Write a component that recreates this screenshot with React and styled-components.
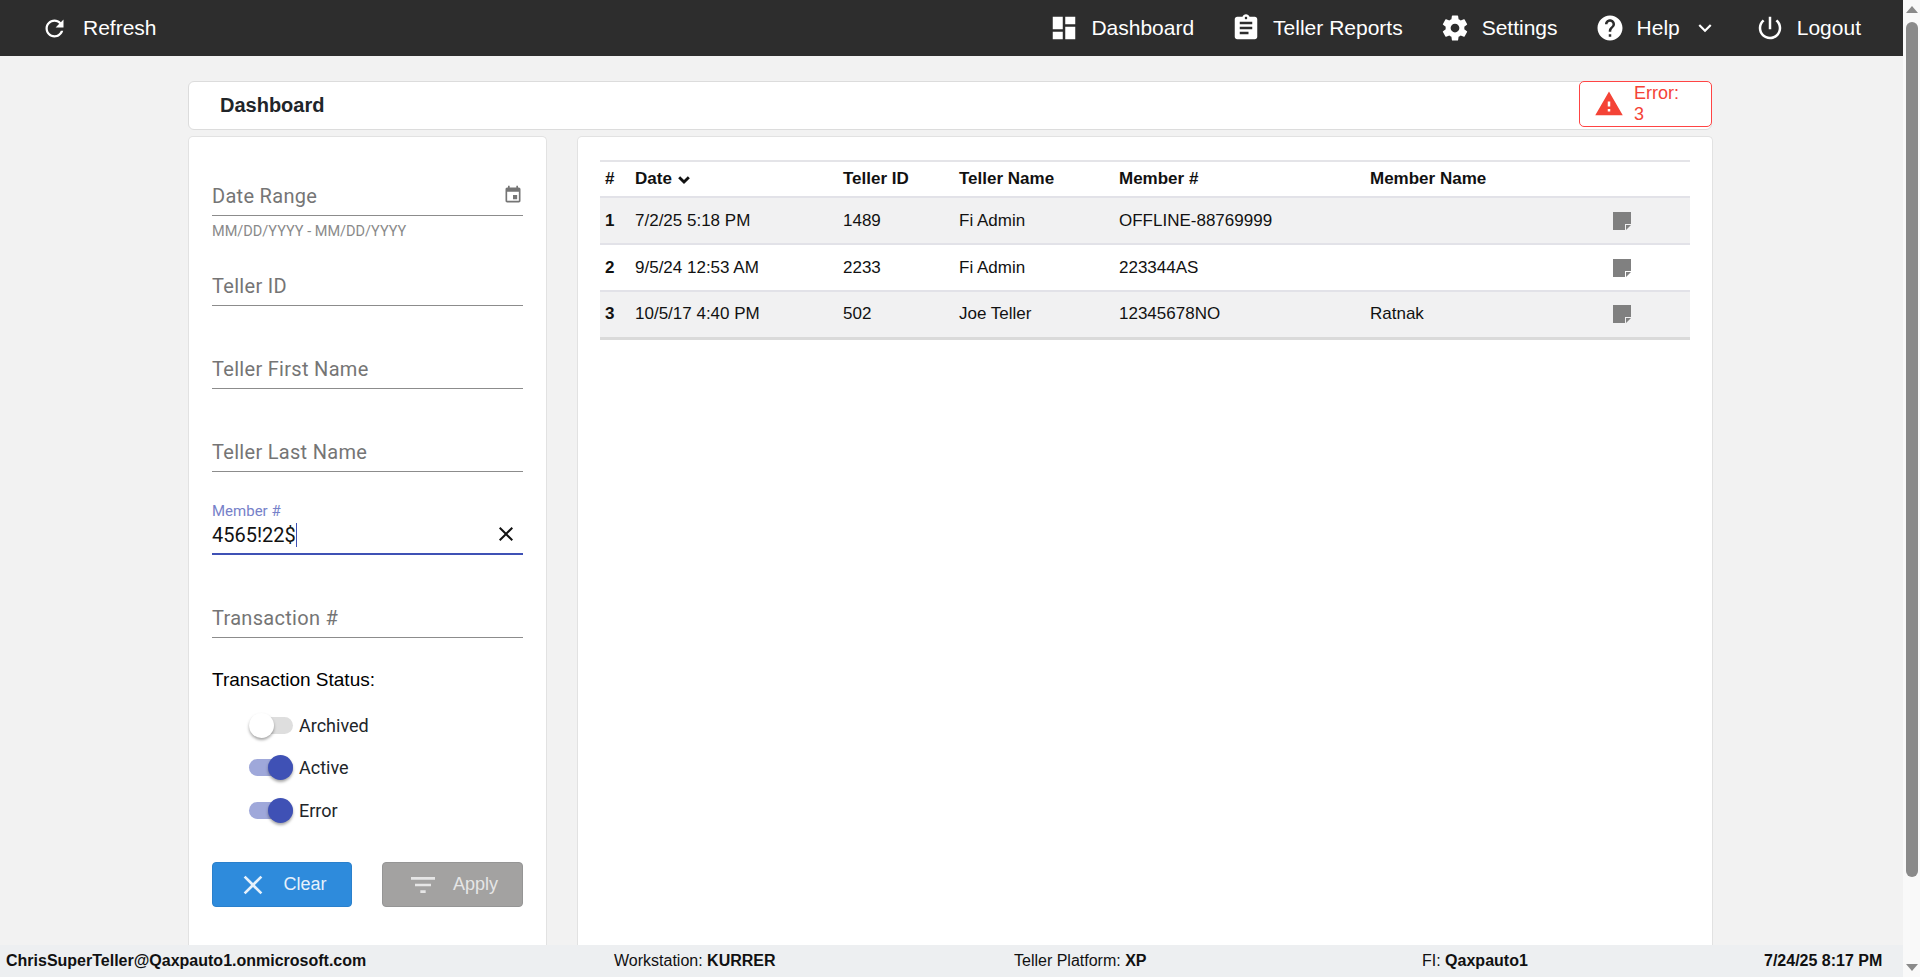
import React from "react";
import styled, { createGlobalStyle } from "styled-components";

const GlobalStyle = createGlobalStyle`
    html, body {
        margin: 0;
        height: 100%;
        overflow: hidden;
    }

    body {
        background: #f2f2f2;
        color: #000;
        font-family: "Liberation Sans", Arial, sans-serif;
    }
`;

const paths = {
    refresh:
        "M17.65 6.35C16.2 4.9 14.21 4 12 4c-4.42 0-7.99 3.58-7.99 8s3.57 8 7.99 8c3.73 0 6.84-2.55 7.73-6h-2.08c-.82 2.33-3.04 4-5.65 4-3.31 0-6-2.69-6-6s2.69-6 6-6c1.66 0 3.14.69 4.22 1.78L13 11h7V4l-2.35 2.35z",
    dashboard: "M3 13h8V3H3v10zm0 8h8v-6H3v6zm10 0h8V11h-8v10zm0-18v6h8V3h-8z",
    assignment:
        "M19 3h-4.18C14.4 1.84 13.3 1 12 1c-1.3 0-2.4.84-2.82 2H5c-1.1 0-2 .9-2 2v14c0 1.1.9 2 2 2h14c1.1 0 2-.9 2-2V5c0-1.1-.9-2-2-2zm-7 0c.55 0 1 .45 1 1s-.45 1-1 1-1-.45-1-1 .45-1 1-1zm2 14H7v-2h7v2zm3-4H7v-2h10v2zm0-4H7V7h10v2z",
    settings:
        "M19.43 12.98c.04-.32.07-.64.07-.98s-.03-.66-.07-.98l2.11-1.65c.19-.15.24-.42.12-.64l-2-3.46c-.12-.22-.39-.3-.61-.22l-2.49 1c-.52-.4-1.08-.73-1.69-.98l-.38-2.65C14.46 2.18 14.25 2 14 2h-4c-.25 0-.46.18-.49.42l-.38 2.65c-.61.25-1.17.59-1.69.98l-2.49-1c-.23-.09-.49 0-.61.22l-2 3.46c-.13.22-.07.49.12.64l2.11 1.65c-.04.32-.07.65-.07.98s.03.66.07.98l-2.11 1.65c-.19.15-.24.42-.12.64l2 3.46c.12.22.39.3.61.22l2.49-1c.52.4 1.08.73 1.69.98l.38 2.65c.03.24.24.42.49.42h4c.25 0 .46-.18.49-.42l.38-2.65c.61-.25 1.17-.59 1.69-.98l2.49 1c.23.09.49 0 .61-.22l2-3.46c.12-.22.07-.49-.12-.64l-2.11-1.65zM12 15.5c-1.93 0-3.5-1.57-3.5-3.5s1.57-3.5 3.5-3.5 3.5 1.57 3.5 3.5-1.57 3.5-3.5 3.5z",
    help: "M12 2C6.48 2 2 6.48 2 12s4.48 10 10 10 10-4.48 10-10S17.52 2 12 2zm1 17h-2v-2h2v2zm2.07-7.75l-.9.92C13.45 12.9 13 13.5 13 15h-2v-.5c0-1.1.45-2.1 1.17-2.83l1.24-1.26c.37-.36.59-.86.59-1.41 0-1.1-.9-2-2-2s-2 .9-2 2H8c0-2.21 1.79-4 4-4s4 1.79 4 4c0 .88-.36 1.68-.93 2.25z",
    expand: "M16.59 8.59L12 13.17 7.41 8.59 6 10l6 6 6-6z",
    power:
        "M13 3h-2v10h2V3zm4.83 2.17l-1.42 1.42C17.99 7.86 19 9.81 19 12c0 3.87-3.13 7-7 7s-7-3.13-7-7c0-2.19 1.01-4.14 2.58-5.42L6.17 5.17C4.23 6.82 3 9.26 3 12c0 4.97 4.03 9 9 9s9-4.03 9-9c0-2.74-1.23-5.18-3.17-6.83z",
    warning: "M1 21h22L12 2 1 21zm12-3h-2v-2h2v2zm0-4h-2v-4h2v4z",
    event: "M17 12h-5v5h5v-5zM16 1v2H8V1H6v2H5c-1.11 0-1.99.9-1.99 2L3 19c0 1.1.89 2 2 2h14c1.1 0 2-.9 2-2V5c0-1.1-.9-2-2-2h-1V1h-2zm3 18H5V8h14v11z",
    clear: "M19 6.41L17.59 5 12 10.59 6.41 5 5 6.41 10.59 12 5 17.59 6.41 19 12 13.41 17.59 19 19 17.59 13.41 12z",
    filter: "M10 18h4v-2h-4v2zM3 6v2h18V6H3zm3 7h12v-2H6v2z",
    note: "M3 3h18v12h-6v6H3zM16 16h5l-5 5z",
    sort: "M7.4 8.6L12 13.2l4.6-4.6L19 11l-7 7-7-7z"
};

const Icon = ({ name, size = 24, color = "currentColor" }) => (
    <svg width={size} height={size} viewBox="0 0 24 24" fill={color} style={{ flex: "none", display: "block" }}>
        <path d={paths[name]} fillRule="evenodd" />
    </svg>
);

const Shell = styled.div`
    display: flex;
    height: 977px;
    overflow: hidden;
`;

const Main = styled.div`
    display: flex;
    flex: 1;
    flex-direction: column;
    min-width: 0;
`;

const TopBar = styled.header`
    align-items: center;
    background: #2d2d2d;
    color: #fff;
    display: flex;
    flex: none;
    font-size: 21px;
    height: 56px;
    justify-content: space-between;
    padding: 0 42px 0 41px;
`;

const NavGroup = styled.nav`
    align-items: center;
    display: flex;
    gap: 37px;
`;

const NavItem = styled.div`
    align-items: center;
    display: flex;
    gap: ${props => props.$gap || 12}px;
`;

const Content = styled.main`
    display: flex;
    flex: 1;
    flex-direction: column;
    gap: 6px;
    min-height: 0;
    padding: 25px 191px 0 188px;
`;

const TitleCard = styled.div`
    align-items: center;
    background: #fff;
    border: 1px solid #dcdcdc;
    border-radius: 6px;
    box-sizing: border-box;
    display: flex;
    flex: none;
    height: 49px;
    justify-content: space-between;
    padding: 0 0 0 31px;
`;

const Title = styled.h1`
    color: #212529;
    font-size: 20px;
    font-weight: 700;
    margin: 0;
`;

const ErrorBadge = styled.div`
    align-items: center;
    background: #fff;
    border: 1px solid #f44;
    border-radius: 5px;
    box-sizing: border-box;
    color: #f44336;
    display: flex;
    font-size: 18px;
    gap: 10px;
    height: 46px;
    margin-right: -1px;
    margin-top: -3px;
    padding: 0 18px 0 14px;
    width: 133px;
`;

const Columns = styled.div`
    display: flex;
    flex: 1;
    gap: 30px;
    min-height: 0;
`;

const Panel = styled.section`
    background: #fff;
    border: 1px solid #e2e2e2;
    border-bottom: none;
    border-radius: 5px 5px 0 0;
    box-sizing: border-box;
`;

const FilterPanel = styled(Panel)`
    flex: none;
    padding: 0 23px;
    width: 359px;
`;

const TablePanel = styled(Panel)`
    flex: 1;
    padding: 23px 22px 0;
`;

const Field = styled.div`
    border-bottom: ${props => (props.$focused ? "2px solid #3f51b5" : "1px solid #8c8c8c")};
    box-sizing: border-box;
    height: ${props => (props.$first ? 79 : 83)}px;
    margin-top: ${props => props.$top || 0}px;
    position: relative;
`;

const Placeholder = styled.span`
    bottom: 7px;
    color: #757575;
    font-family: Roboto, sans-serif;
    font-size: 20px;
    left: 0;
    letter-spacing: 0.3px;
    position: absolute;
`;

const FloatLabel = styled.span`
    bottom: 33px;
    color: #7681c9;
    font-family: Roboto, sans-serif;
    font-size: 15px;
    left: 0;
    position: absolute;
`;

const FieldValue = styled.span`
    border-right: 1px solid #3f51b5;
    bottom: 6px;
    color: #111;
    font-family: Roboto, sans-serif;
    font-size: 20px;
    left: 0;
    line-height: 24px;
    position: absolute;
`;

const FieldIcon = styled.span`
    bottom: ${props => props.$bottom}px;
    color: ${props => props.$color};
    position: absolute;
    right: ${props => props.$right}px;
`;

const Hint = styled.div`
    color: #8a8a8a;
    font-family: Roboto, sans-serif;
    font-size: 14.5px;
    height: 0;
    line-height: 17px;
    margin-top: 7px;
`;

const StatusHeading = styled.div`
    font-size: 19px;
    line-height: 22px;
    margin-top: 31px;
`;

const ToggleRow = styled.label`
    align-items: center;
    color: #212529;
    display: flex;
    font-family: Roboto, sans-serif;
    font-size: 18px;
    gap: 6px;
    height: 24px;
    margin-top: ${props => props.$top}px;
    padding-left: 37px;
`;

const Track = styled.span`
    background: ${props => (props.$on ? "#9fa8da" : "#dedede")};
    border-radius: 9px;
    display: block;
    height: 17px;
    position: relative;
    width: 44px;
`;

const Thumb = styled.span`
    background: ${props => (props.$on ? "#3f51b5" : "#fff")};
    border-radius: 50%;
    box-shadow: 0 2px 3px rgba(0, 0, 0, 0.35);
    height: 25px;
    ${props => (props.$on ? "right: 0;" : "left: 0;")}
    position: absolute;
    top: -4px;
    width: 25px;
`;

const ButtonRow = styled.div`
    display: flex;
    justify-content: space-between;
    margin-top: 40px;
`;

const Button = styled.button`
    align-items: center;
    background: ${props => (props.$disabled ? "#a3a2a1" : "#2e8bdc")};
    border: 1px solid ${props => (props.$disabled ? "#959595" : "#2a80cc")};
    border-radius: 4px;
    color: ${props => (props.$disabled ? "#e6e6e6" : "#e6f1fb")};
    display: flex;
    font-family: "Liberation Sans", Arial, sans-serif;
    font-size: 18px;
    gap: 14px;
    height: 45px;
    justify-content: center;
    padding: 0;
    width: ${props => props.$width}px;
`;

const Table = styled.table`
    border-collapse: collapse;
    table-layout: fixed;
    width: 1090px;
    border-top: 2px solid #e4e4e8;
    border-bottom: 3px solid #dadada;
`;

const Th = styled.th`
    box-sizing: border-box;
    color: #111;
    font-size: 17px;
    font-weight: 700;
    height: 36px;
    padding: 0 0 0 ${props => props.$pad || 0}px;
    text-align: left;
    width: ${props => props.$width}px;
`;

const Row = styled.tr`
    background: ${props => (props.$striped ? "#f1f1f2" : "#fff")};
    border-top: 2px solid #e2e2e8;
    height: 47px;
`;

const Td = styled.td`
    color: #111;
    font-size: 17px;
    font-weight: ${props => (props.$bold ? 700 : 400)};
    padding: 0 0 0 ${props => props.$pad || 0}px;
`;

const SortHead = styled.span`
    align-items: center;
    display: flex;
    gap: 2px;
`;

const Footer = styled.footer`
    align-items: center;
    background: #edeff1;
    color: #111;
    display: grid;
    flex: none;
    font-size: 16px;
    grid-template-columns: 608px 400px 408px 342px 1fr;
    height: 32px;
    padding-left: 6px;
`;

const FooterBold = styled.b`
    font-weight: 700;
`;

const ScrollRail = styled.div`
    align-items: center;
    background: #f9f9f9;
    display: flex;
    flex: none;
    flex-direction: column;
    position: relative;
    width: 17px;
`;

const ScrollArrow = styled.span`
    border-left: 6px solid transparent;
    border-right: 6px solid transparent;
    ${props => (props.$down ? "border-top: 7px solid #8a8a8a;" : "border-bottom: 7px solid #8a8a8a;")}
    margin: ${props => (props.$down ? "auto 0 6px" : "6px 0 0")};
`;

const ScrollThumb = styled.span`
    background: #8a8a8a;
    border-radius: 6px;
    height: 855px;
    margin-top: 9px;
    width: 12px;
`;

const rows = [
    ["1", "7/2/25 5:18 PM", "1489", "Fi Admin", "OFFLINE-88769999", ""],
    ["2", "9/5/24 12:53 AM", "2233", "Fi Admin", "223344AS", ""],
    ["3", "10/5/17 4:40 PM", "502", "Joe Teller", "12345678NO", "Ratnak"]
];

const Toggle = ({ on, label, top }) => (
    <ToggleRow $top={top}>
        <Track $on={on}>
            <Thumb $on={on} />
        </Track>
        {label}
    </ToggleRow>
);

const App = () => (
    <Shell>
        <GlobalStyle />
        <Main>
            <TopBar>
                <NavItem $gap={15}>
                    <Icon name="refresh" size={27} />
                    Refresh
                </NavItem>
                <NavGroup>
                    <NavItem>
                        <Icon name="dashboard" size={30} />
                        Dashboard
                    </NavItem>
                    <NavItem>
                        <Icon name="assignment" size={30} />
                        Teller Reports
                    </NavItem>
                    <NavItem>
                        <Icon name="settings" size={30} />
                        Settings
                    </NavItem>
                    <NavItem>
                        <Icon name="help" size={30} />
                        Help
                        <Icon name="expand" size={26} />
                    </NavItem>
                    <NavItem>
                        <Icon name="power" size={30} />
                        Logout
                    </NavItem>
                </NavGroup>
            </TopBar>
            <Content>
                <TitleCard>
                    <Title>Dashboard</Title>
                    <ErrorBadge>
                        <Icon name="warning" size={30} color="#f44336" />
                        Error: 3
                    </ErrorBadge>
                </TitleCard>
                <Columns>
                    <FilterPanel>
                        <Field $first>
                            <Placeholder>Date Range</Placeholder>
                            <FieldIcon $bottom={10} $right={0} $color="#757575">
                                <Icon name="event" size={20} />
                            </FieldIcon>
                        </Field>
                        <Hint>MM/DD/YYYY - MM/DD/YYYY</Hint>
                        <Field>
                            <Placeholder>Teller ID</Placeholder>
                        </Field>
                        <Field>
                            <Placeholder>Teller First Name</Placeholder>
                        </Field>
                        <Field>
                            <Placeholder>Teller Last Name</Placeholder>
                        </Field>
                        <Field $focused>
                            <FloatLabel>Member #</FloatLabel>
                            <FieldValue>4565!22$</FieldValue>
                            <FieldIcon $bottom={7} $right={5} $color="#111">
                                <Icon name="clear" size={24} />
                            </FieldIcon>
                        </Field>
                        <Field>
                            <Placeholder>Transaction #</Placeholder>
                        </Field>
                        <StatusHeading>Transaction Status:</StatusHeading>
                        <Toggle label="Archived" top={22} />
                        <Toggle on label="Active" top={18} />
                        <Toggle on label="Error" top={19} />
                        <ButtonRow>
                            <Button $width={140}>
                                <Icon name="clear" size={32} />
                                Clear
                            </Button>
                            <Button $disabled $width={141}>
                                <Icon name="filter" size={32} />
                                Apply
                            </Button>
                        </ButtonRow>
                    </FilterPanel>
                    <TablePanel>
                        <Table>
                            <thead>
                                <tr>
                                    <Th $width={35} $pad={5}>#</Th>
                                    <Th $width={208}>
                                        <SortHead>
                                            Date
                                            <Icon name="sort" size={20} />
                                        </SortHead>
                                    </Th>
                                    <Th $width={116}>Teller ID</Th>
                                    <Th $width={160}>Teller Name</Th>
                                    <Th $width={251}>Member #</Th>
                                    <Th $width={240}>Member Name</Th>
                                    <Th $width={80} />
                                </tr>
                            </thead>
                            <tbody>
                                {rows.map((row, i) => (
                                    <Row key={row[0]} $striped={i % 2 === 0}>
                                        <Td $bold $pad={5}>{row[0]}</Td>
                                        <Td>{row[1]}</Td>
                                        <Td>{row[2]}</Td>
                                        <Td>{row[3]}</Td>
                                        <Td>{row[4]}</Td>
                                        <Td>{row[5]}</Td>
                                        <Td>
                                            <Icon name="note" size={24} color="#808080" />
                                        </Td>
                                    </Row>
                                ))}
                            </tbody>
                        </Table>
                    </TablePanel>
                </Columns>
            </Content>
            <Footer>
                <FooterBold>ChrisSuperTeller@Qaxpauto1.onmicrosoft.com</FooterBold>
                <span>Workstation: <FooterBold>KURRER</FooterBold></span>
                <span>Teller Platform: <FooterBold>XP</FooterBold></span>
                <span>FI: <FooterBold>Qaxpauto1</FooterBold></span>
                <FooterBold>7/24/25 8:17 PM</FooterBold>
            </Footer>
        </Main>
        <ScrollRail>
            <ScrollArrow />
            <ScrollThumb />
            <ScrollArrow $down />
        </ScrollRail>
    </Shell>
);

export default App;
